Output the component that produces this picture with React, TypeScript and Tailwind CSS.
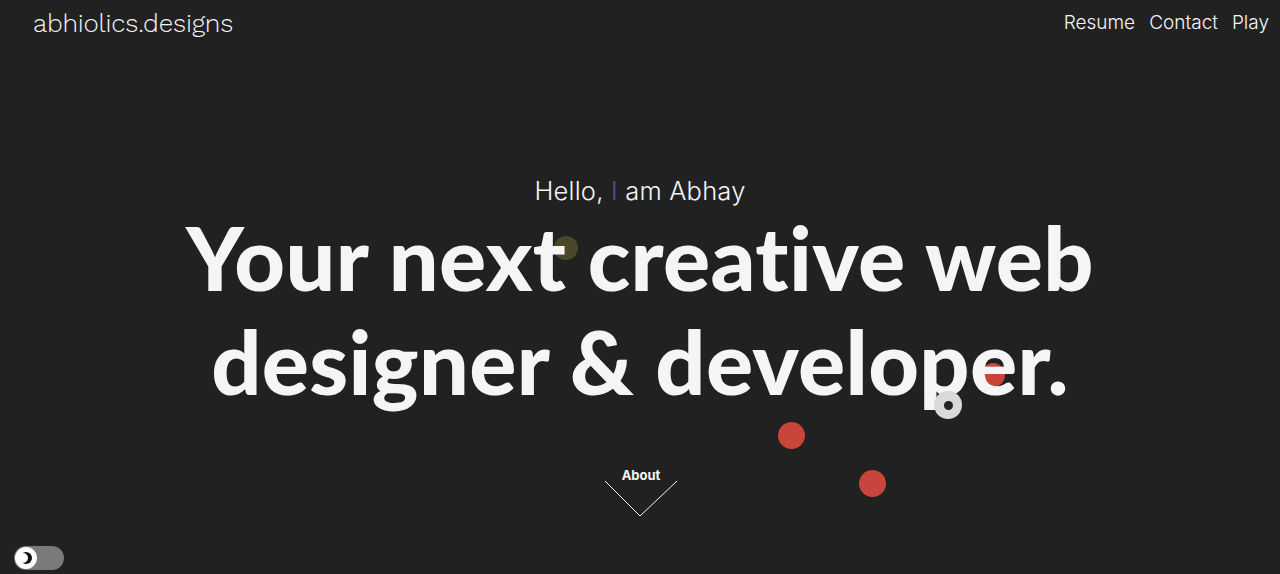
import React from "react";

export default function App() {
  return (
    <div className="relative h-[574px] w-full overflow-hidden bg-[#212121] text-[#f5f5f5]">
      <header className="flex items-start justify-between pl-[33px] pr-[11px] pt-[6px]">
        <div className="text-[26px] font-light leading-[34px] tracking-[-0.2px]" style={{ fontFamily: "'Work Sans', Inter, sans-serif" }}>
          abhiolics.designs
        </div>
        <nav className="flex gap-[14px] pt-[3px] text-[19px] font-light leading-[28px]" style={{ fontFamily: "Inter, sans-serif" }}>
          <span>Resume</span>
          <span>Contact</span>
          <span>Play</span>
        </nav>
      </header>

      <main className="flex flex-col items-center pt-[135px]">
        <div className="text-[25.5px] font-light leading-[32px] tracking-[0.2px]" style={{ fontFamily: "Inter, sans-serif" }}>
          Hello, <span className="text-[#5b4a9e]">I</span> am Abhay
        </div>
        <h1
          className="relative z-10 mt-[-2px] text-center text-[88px] font-black leading-[104px] tracking-[0.35px]"
          style={{ fontFamily: "Lato, 'Noto Sans', sans-serif" }}
        >
          Your next creative web
          <br />
          designer &amp; developer.
        </h1>
        <div className="ml-[2px] mt-[54px] flex flex-col items-center">
          <span className="text-[13px] font-bold leading-[16px]" style={{ fontFamily: "Inter, sans-serif" }}>
            About
          </span>
          <svg width="74" height="38" viewBox="0 0 74 38" className="mt-[-4px]">
            <polyline points="1,2 36,37 73,2" fill="none" stroke="#f5f5f5" strokeWidth="1" />
          </svg>
        </div>
      </main>

      {/* decorative dots */}
      <div className="absolute left-[554px] top-[236px] h-[24px] w-[24px] rounded-full bg-[#5c5a2e] opacity-70" />
      <div className="absolute left-[981px] top-[363px] h-[24px] w-[24px] rounded-full bg-[#c9453c]" />
      <div className="absolute left-[778px] top-[422px] h-[27px] w-[27px] rounded-full bg-[#c9453c]" />
      <div className="absolute left-[859px] top-[470px] h-[27px] w-[27px] rounded-full bg-[#c9453c]" />
      <div className="absolute left-[934px] top-[391px] z-20 flex h-[28px] w-[28px] items-center justify-center rounded-full bg-[#d9d9d9]">
        <div className="h-[9px] w-[9px] rounded-full bg-[#222]" />
      </div>

      {/* toggle */}
      <div className="absolute bottom-[4px] left-[14px] flex h-[24px] w-[50px] items-center rounded-full bg-[#7a7a7a] pl-[1px]">
        <div className="flex h-[22px] w-[22px] items-center justify-center rounded-full bg-white">
          <svg width="14" height="14" viewBox="0 0 14 14">
            <circle cx="7" cy="7" r="6" fill="#111" />
            <circle cx="4" cy="7" r="5" fill="#fff" />
          </svg>
        </div>
      </div>
    </div>
  );
}
